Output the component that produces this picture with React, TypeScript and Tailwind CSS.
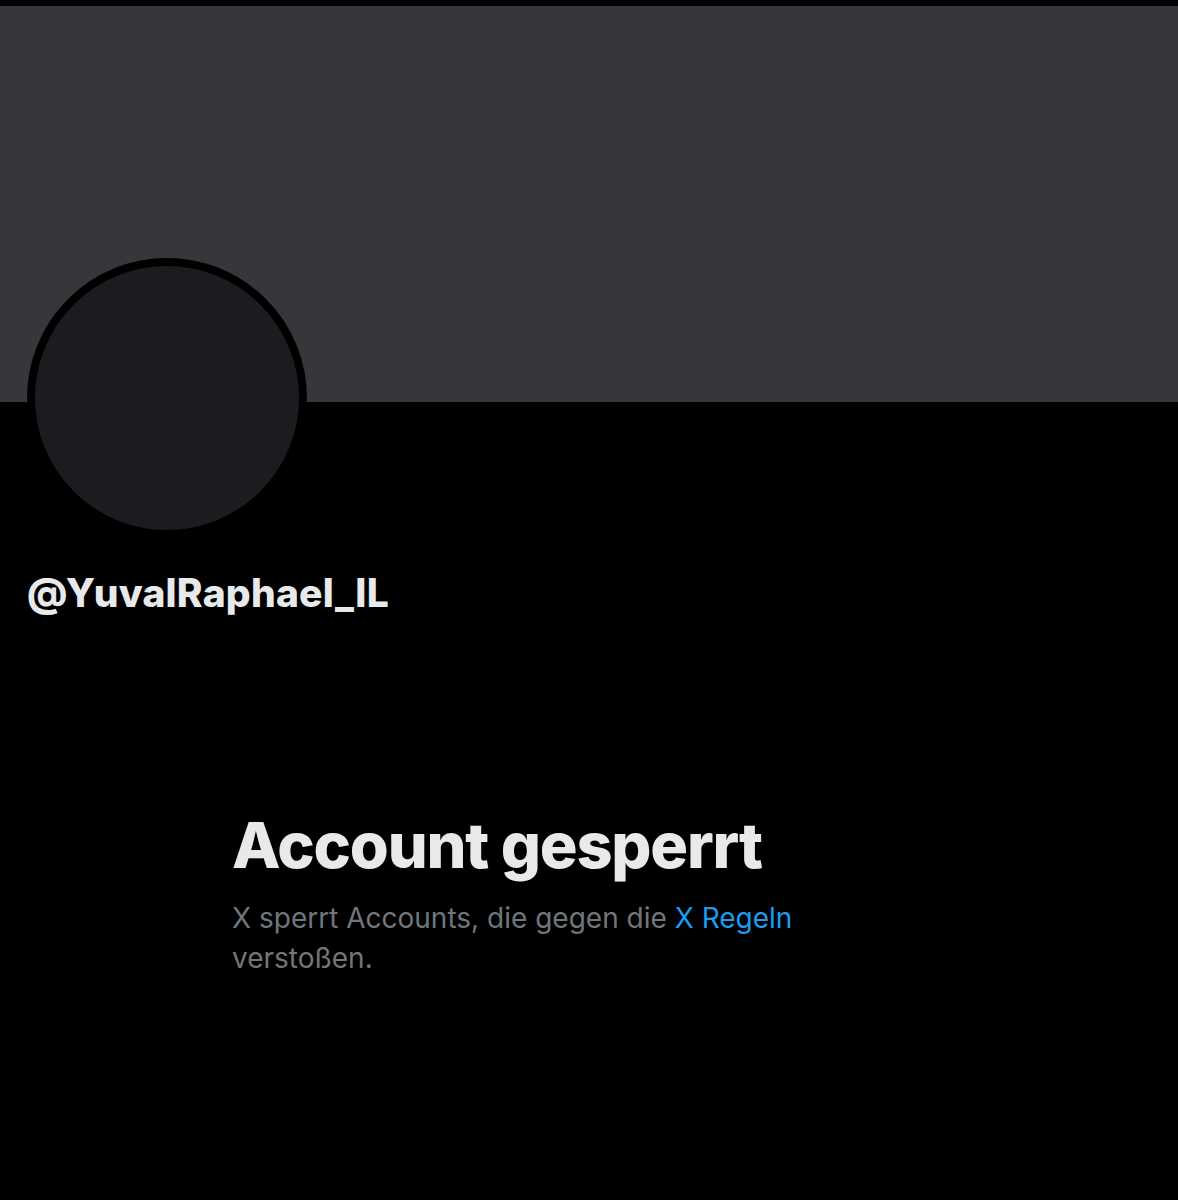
export default function App() {
  return (
    <div className="min-h-[1200px] w-[1178px] bg-black" style={{ fontFamily: 'Inter, "Noto Sans", sans-serif' }}>
      <div className="h-[6px] bg-black" />
      <div className="h-[396px] bg-[#36373b]" />
      <div className="px-[27px]">
        <div className="-mt-[144px] h-[280px] w-[280px] rounded-full border-[8px] border-black bg-[#1b1c20]" />
        <div className="mt-[31px] text-[39px] font-extrabold leading-[48px] tracking-[0.2px] text-[#e7e9ea]">
          @YuvalRaphael_IL
        </div>
      </div>
      <div className="mt-[190px] pl-[232px]">
        <h1 className="text-[63px] font-extrabold leading-[76px] tracking-[-1.2px] text-[#e7e9ea]">Account gesperrt</h1>
        <p className="mt-[15px] w-[600px] text-[28px] leading-[40px] text-[#71767b]">
          X sperrt Accounts, die gegen die <span className="text-[#1d9bf0]">X Regeln</span> verstoßen.
        </p>
      </div>
    </div>
  );
}
